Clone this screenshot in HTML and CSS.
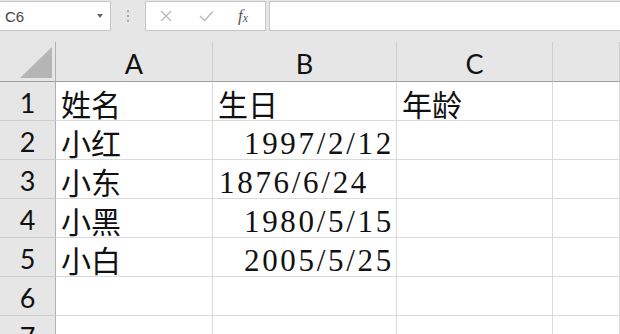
FILE: index.html
```html
<!DOCTYPE html>
<html lang="zh-CN">
<head>
    <meta charset="UTF-8">
    <meta name="viewport" content="width=device-width, initial-scale=1.0">
    <title>Sheet1</title>
    <link rel="stylesheet" href="styles.css">
</head>
<body>
    <div class="fbar">
        <div class="namebox">
            <span>C6</span>
            <span class="caret"></span>
        </div>
        <div class="grip"><i></i><i></i><i></i></div>
        <div class="fbtns">
            <svg class="ico" width="12" height="12" viewBox="0 0 12 12">
                <path d="M1 1 L11 11 M11 1 L1 11" stroke="#b9b9b9" stroke-width="1.4" fill="none"/>
            </svg>
            <svg class="ico" width="15" height="12" viewBox="0 0 15 12">
                <path d="M1 6 L5.5 10.5 L14 1.5" stroke="#b9b9b9" stroke-width="1.4" fill="none"/>
            </svg>
            <span class="fx">f<sub>x</sub></span>
        </div>
        <div class="finput"></div>
    </div>

    <div class="sheet">
        <div class="corner"><span class="tri"></span></div>
        <div class="ch">A</div>
        <div class="ch">B</div>
        <div class="ch">C</div>
        <div class="ch"></div>

        <div class="rh">1</div>
        <div class="c">姓名</div>
        <div class="c">生日</div>
        <div class="c">年龄</div>
        <div class="c"></div>

        <div class="rh">2</div>
        <div class="c">小红</div>
        <div class="c num right">1997/2/12</div>
        <div class="c"></div>
        <div class="c"></div>

        <div class="rh">3</div>
        <div class="c">小东</div>
        <div class="c num">1876/6/24</div>
        <div class="c"></div>
        <div class="c"></div>

        <div class="rh">4</div>
        <div class="c">小黑</div>
        <div class="c num right">1980/5/15</div>
        <div class="c"></div>
        <div class="c"></div>

        <div class="rh">5</div>
        <div class="c">小白</div>
        <div class="c num right">2005/5/25</div>
        <div class="c"></div>
        <div class="c"></div>

        <div class="rh">6</div>
        <div class="c"></div>
        <div class="c"></div>
        <div class="c"></div>
        <div class="c"></div>

        <div class="rh">7</div>
        <div class="c"></div>
        <div class="c"></div>
        <div class="c"></div>
        <div class="c"></div>
    </div>
</body>
</html>
```

FILE: styles.css
```css
* {
    box-sizing: border-box;
}

body {
    margin: 0;
    background-color: #e6e6e6;
    overflow: hidden;
    font-family: "Liberation Sans", sans-serif;
}

/* formula bar */

.fbar {
    display: flex;
    align-items: flex-start;
    height: 42px;
    padding-top: 1px;
}

.namebox {
    display: flex;
    align-items: center;
    justify-content: space-between;
    width: 111px;
    height: 30px;
    padding: 0 7px 0 5px;
    background-color: #fff;
    border: 1px solid #c6c6c6;
    border-left: none;
    font-size: 15px;
    color: #444;
}

.caret {
    width: 0;
    height: 0;
    border-left: 3.5px solid transparent;
    border-right: 3.5px solid transparent;
    border-top: 4px solid #666;
}

.grip {
    display: flex;
    flex-direction: column;
    gap: 3px;
    width: 34px;
    height: 30px;
    align-items: center;
    padding-top: 9px;
}

.grip i {
    width: 2px;
    height: 2px;
    background-color: #a8a8a8;
}

.fbtns {
    display: flex;
    align-items: center;
    width: 121px;
    height: 30px;
    padding-left: 14px;
    background-color: #fff;
    border: 1px solid #c6c6c6;
}

.ico {
    margin-right: 27px;
}

.fbtns .ico + .ico {
    margin-right: 24px;
}

.fx {
    font-family: "Liberation Serif", serif;
    font-style: italic;
    font-size: 17px;
    color: #555;
}

.fx sub {
    font-size: 12px;
    vertical-align: -1px;
}

.finput {
    flex: 1;
    height: 30px;
    margin-left: 3px;
    background-color: #fff;
    border: 1px solid #c6c6c6;
    border-right: none;
}

/* sheet */

.sheet {
    display: grid;
    grid-template-columns: 56px 157px 184px 156px 1fr;
    grid-template-rows: 40px;
    grid-auto-rows: 39px;
    background-color: #fff;
}

.corner,
.ch,
.rh {
    background-color: #e6e6e6;
}

.corner {
    position: relative;
    border-right: 1px solid #b1b1b1;
    border-bottom: 1px solid #9e9e9e;
}

.tri {
    position: absolute;
    right: 3px;
    bottom: 3px;
    width: 0;
    height: 0;
    border-left: 32px solid transparent;
    border-bottom: 31px solid #b5b5b5;
}

.ch {
    display: flex;
    align-items: center;
    justify-content: center;
    padding-top: 3px;
    border-right: 1px solid #cdcdcd;
    border-bottom: 1px solid #9e9e9e;
    font-family: Lato, "Liberation Sans", sans-serif;
    font-size: 27px;
    color: #111;
}

.rh {
    display: flex;
    align-items: center;
    justify-content: center;
    padding-top: 3px;
    border-right: 1px solid #b1b1b1;
    border-bottom: 1px solid #cdcdcd;
    font-family: Lato, "Liberation Sans", sans-serif;
    font-size: 27px;
    color: #111;
}

.c {
    display: flex;
    align-items: flex-end;
    padding: 0 5px 2px 5px;
    border-right: 1px solid #dadada;
    border-bottom: 1px solid #dadada;
    font-family: "Noto Sans CJK SC", sans-serif;
    font-size: 30px;
    line-height: 1;
    color: #111;
    white-space: nowrap;
}

.num {
    padding-bottom: 0;
    font-family: "Liberation Serif", serif;
    font-size: 31px;
    letter-spacing: 2.7px;
    padding-left: 6px;
}

.right {
    justify-content: flex-end;
    padding-right: 2px;
}
```
